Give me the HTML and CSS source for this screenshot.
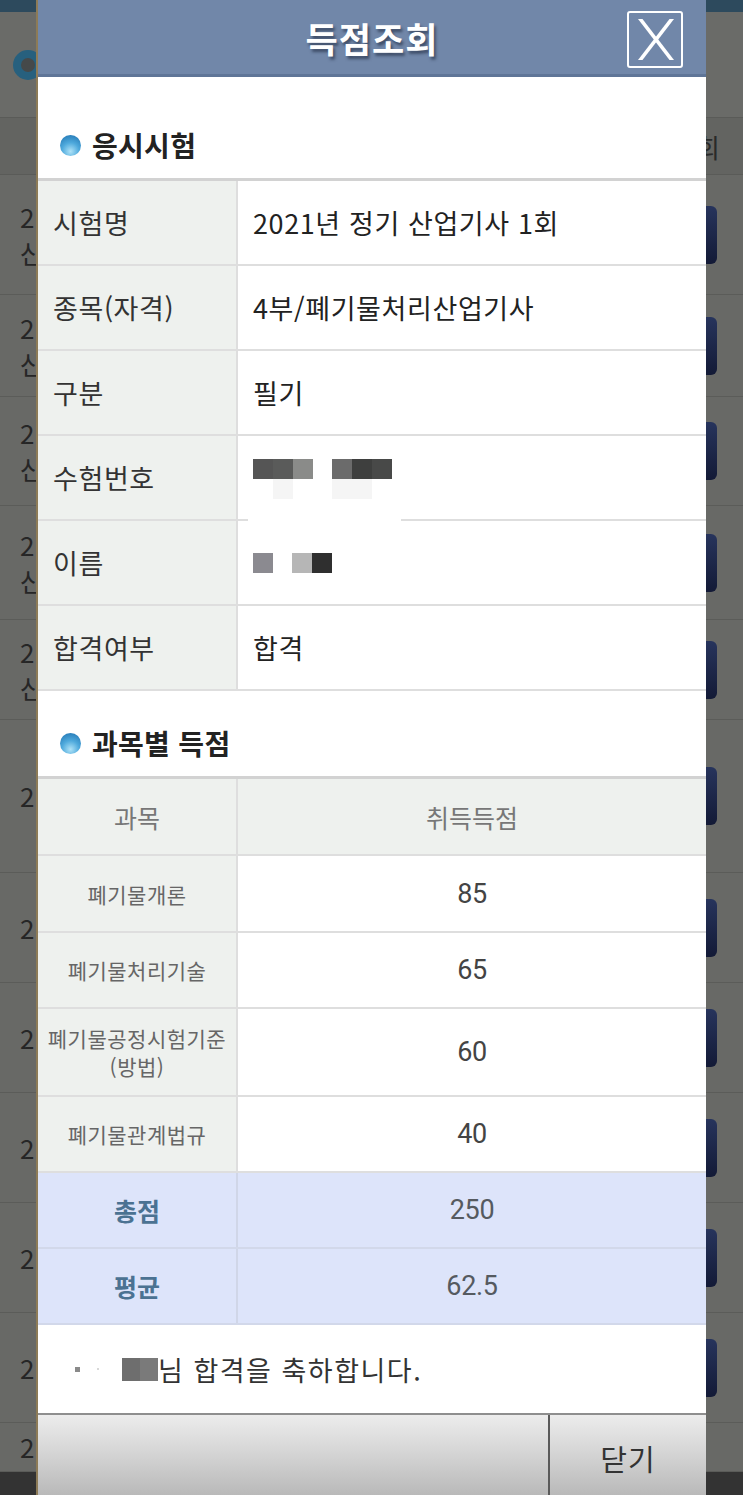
FILE: index.html
```html
<!DOCTYPE html>
<html lang="ko">
<head>
<meta charset="utf-8">
<title>득점조회</title>
<link rel="stylesheet" href="styles.css">
</head>
<body>
<div class="page">
  <div class="bg">
    <div class="bg-topbar"></div>
    <div class="bg-top"><span class="bg-ring"></span></div>
    <div class="bg-head"><span class="bg-head-text">회</span></div>
    <div class="bg-row h120"><div class="bg-cell">2<br>산</div><span class="bg-btn"></span></div>
    <div class="bg-row h102"><div class="bg-cell">2<br>산</div><span class="bg-btn"></span></div>
    <div class="bg-row h109"><div class="bg-cell">2<br>산</div><span class="bg-btn"></span></div>
    <div class="bg-row h114"><div class="bg-cell">2<br>산</div><span class="bg-btn"></span></div>
    <div class="bg-row h100"><div class="bg-cell">2<br>산</div><span class="bg-btn"></span></div>
    <div class="bg-row h153"><div class="bg-cell">2</div><span class="bg-btn"></span></div>
    <div class="bg-row h110"><div class="bg-cell">2</div><span class="bg-btn"></span></div>
    <div class="bg-row h110"><div class="bg-cell">2</div><span class="bg-btn"></span></div>
    <div class="bg-row h110"><div class="bg-cell">2</div><span class="bg-btn"></span></div>
    <div class="bg-row h110"><div class="bg-cell">2</div><span class="bg-btn"></span></div>
    <div class="bg-row h110"><div class="bg-cell">2</div><span class="bg-btn"></span></div>
    <div class="bg-row h49"><div class="bg-cell">2</div></div>
    <div class="bg-bottom"></div>
  </div>

  <div class="modal">
    <div class="m-head">
      <span class="m-title">득점조회</span>
      <span class="m-close">
        <svg width="52" height="53" viewBox="0 0 52 53">
          <path d="M9 6 L13.5 6 L45 47 L40.5 47 Z" fill="#fff"/>
          <path d="M40.5 6 L45 6 L13.5 47 L9 47 Z" fill="#fff"/>
        </svg>
      </span>
    </div>

    <div class="sec-title first">
      <span class="sec-label"><span class="ball"></span>응시시험</span>
    </div>

    <div class="info">
      <div class="info-row"><div class="info-label">시험명</div><div class="info-value">2021년 정기 산업기사 1회</div></div>
      <div class="info-row"><div class="info-label">종목(자격)</div><div class="info-value">4부/폐기물처리산업기사</div></div>
      <div class="info-row"><div class="info-label">구분</div><div class="info-value">필기</div></div>
      <div class="info-row gap-row"><div class="info-label">수험번호</div><div class="info-value">
        <span class="pix-group">
          <span class="pix-line"><span class="px p1"></span><span class="px p2"></span><span class="px p3"></span><span class="px sp"></span><span class="px p4"></span><span class="px p5"></span><span class="px p6"></span></span>
          <span class="pix-line"><span class="px pw0"></span><span class="px pw"></span><span class="px pw0"></span><span class="px sp"></span><span class="px pw"></span><span class="px pw"></span><span class="px pw0"></span></span>
        </span>
        <span class="border-gap"></span>
      </div></div>
      <div class="info-row"><div class="info-label">이름</div><div class="info-value">
        <span class="pix-line"><span class="px p7"></span><span class="px sp"></span><span class="px p8"></span><span class="px p9"></span></span>
      </div></div>
      <div class="info-row"><div class="info-label">합격여부</div><div class="info-value">합격</div></div>
    </div>

    <div class="sec-title second">
      <span class="sec-label"><span class="ball"></span>과목별 득점</span>
    </div>

    <div class="score">
      <div class="score-row head h77"><div class="s-label">과목</div><div class="s-value">취득득점</div></div>
      <div class="score-row h77"><div class="s-label">폐기물개론</div><div class="s-value num">85</div></div>
      <div class="score-row h76"><div class="s-label">폐기물처리기술</div><div class="s-value num">65</div></div>
      <div class="score-row h88"><div class="s-label">폐기물공정시험기준<br>(방법)</div><div class="s-value num">60</div></div>
      <div class="score-row h76"><div class="s-label">폐기물관계법규</div><div class="s-value num">40</div></div>
      <div class="score-row total h76"><div class="s-label">총점</div><div class="s-value num">250</div></div>
      <div class="score-row total h76"><div class="s-label">평균</div><div class="s-value num">62.5</div></div>
    </div>

    <div class="message">
      <span class="bullet"></span>
      <span class="faint-dot"></span>
      <span class="name-blur"><span class="nb1"></span><span class="nb2"></span></span>
      <span class="msg-text">님 합격을 축하합니다.</span>
    </div>

    <div class="btn-bar">
      <div class="btn-left"></div>
      <div class="btn-close">닫기</div>
    </div>
  </div>
</div>
</body>
</html>
```

FILE: styles.css
```css
html, body {
  margin: 0;
  padding: 0;
}

.page {
  position: relative;
  width: 743px;
  height: 1495px;
  overflow: hidden;
  background: #686966;
  font-family: "Noto Sans CJK KR", "Noto Sans", sans-serif;
}

/* ---------- dimmed page behind ---------- */
.bg {
  display: flex;
  flex-direction: column;
  width: 743px;
}

.bg-topbar {
  height: 12px;
  background: #2d4a5d;
}

.bg-top {
  height: 105px;
  box-sizing: border-box;
  padding: 38px 0 0 13px;
  background: #6a6b68;
}

.bg-ring {
  display: block;
  width: 30px;
  height: 30px;
  border-radius: 50%;
  box-sizing: border-box;
  border: 8px solid #27607e;
  background: #45494a;
}

.bg-head {
  height: 58px;
  box-sizing: border-box;
  background: #636461;
  border-top: 1px solid #5a5b58;
  border-bottom: 1px solid #5a5b58;
  display: flex;
  align-items: center;
  justify-content: flex-end;
  padding-right: 23px;
}

.bg-head-text {
  font-size: 26px;
  color: #2a2a2a;
}

.bg-row {
  box-sizing: border-box;
  border-bottom: 1px solid #5b5c59;
  display: flex;
  align-items: center;
  justify-content: space-between;
}

.h120 { height: 120px; }
.h102 { height: 102px; }
.h109 { height: 109px; }
.h114 { height: 114px; }
.h100 { height: 100px; }
.h153 { height: 153px; }
.h110 { height: 110px; }
.h49 { height: 49px; }

.bg-cell {
  margin-left: 20px;
  font-size: 26px;
  line-height: 36px;
  color: #262626;
  white-space: nowrap;
}

.bg-btn {
  display: block;
  width: 60px;
  height: 58px;
  margin-right: 26px;
  border-radius: 6px;
  background: linear-gradient(#27345c, #131a36);
}

.bg-bottom {
  height: 23px;
  background: #333333;
}

/* ---------- modal ---------- */
.modal {
  position: absolute;
  top: 0;
  left: 36px;
  width: 670px;
  height: 1495px;
  box-sizing: border-box;
  border-left: 2px solid #8d7b57;
  background: #ffffff;
  display: flex;
  flex-direction: column;
}

.m-head {
  position: relative;
  height: 77px;
  flex: none;
  box-sizing: border-box;
  background: #7187a9;
  border-bottom: 3px solid #5f7597;
  display: flex;
  align-items: center;
  justify-content: center;
}

.m-title {
  font-size: 35px;
  font-weight: 700;
  color: #ffffff;
  letter-spacing: 1px;
  text-shadow: 2px 3px 3px rgba(20, 30, 50, 0.55);
}

.m-close {
  position: absolute;
  top: 11px;
  right: 23px;
  width: 56px;
  height: 57px;
  box-sizing: border-box;
  border: 2px solid #ffffff;
  border-radius: 3px;
  display: flex;
}

.sec-title {
  flex: none;
  box-sizing: border-box;
  display: flex;
  align-items: flex-end;
  padding: 0 0 13px 22px;
}

.sec-title.first { height: 101px; }
.sec-title.second { height: 85px; }

.sec-label {
  display: flex;
  align-items: center;
  gap: 11px;
  font-size: 28px;
  font-weight: 700;
  line-height: 40px;
  letter-spacing: 0.3px;
  color: #222222;
}

.ball {
  display: block;
  width: 21px;
  height: 21px;
  border-radius: 50%;
  background: radial-gradient(circle at 50% 78%, #aee2f7 0%, #4ea9dc 45%, #1c6fae 100%);
}

/* info table */
.info {
  flex: none;
  border-top: 3px solid #d2d2d2;
}

.info-row {
  display: grid;
  grid-template-columns: 200px 1fr;
  height: 85px;
  box-sizing: border-box;
  border-bottom: 2px solid #dedede;
}

.info-label {
  background: #eef1ee;
  border-right: 2px solid #dedede;
  padding-left: 15px;
  display: flex;
  align-items: center;
  font-size: 27px;
  letter-spacing: 0.6px;
  color: #333333;
}

.info-value {
  position: relative;
  padding-left: 15px;
  display: flex;
  align-items: center;
  font-size: 27px;
  letter-spacing: 0.6px;
  color: #222222;
}

.gap-row .info-value {
  align-items: flex-start;
  padding-top: 23px;
  box-sizing: border-box;
}

.pix-group {
  display: flex;
  flex-direction: column;
}

.pix-line {
  display: flex;
}

.px {
  display: block;
  width: 20px;
  height: 20px;
}

.px.sp { width: 19px; }
.p1 { background: #555555; }
.p2 { background: #5a5b5a; }
.p3 { background: #8a8b89; }
.p4 { background: #6b6b6b; }
.p5 { background: #3e3f3e; }
.p6 { background: #484948; }
.p7 { background: #8b8a90; }
.p8 { background: #b6b6b6; }
.p9 { background: #2f2f2f; }
.pw { background: #f5f5f5; }
.pw0 { background: transparent; }

.border-gap {
  position: absolute;
  left: 10px;
  bottom: -2px;
  width: 153px;
  height: 2px;
  background: #ffffff;
}

/* score table */
.score {
  flex: none;
  border-top: 3px solid #d2d2d2;
}

.score-row {
  display: grid;
  grid-template-columns: 200px 1fr;
  box-sizing: border-box;
  border-bottom: 2px solid #dedede;
}

.h77 { height: 77px; }
.h76 { height: 76px; }
.h88 { height: 88px; }

.s-label {
  background: #eef1ee;
  border-right: 2px solid #dedede;
  display: flex;
  align-items: center;
  justify-content: center;
  text-align: center;
  font-size: 21px;
  line-height: 28px;
  letter-spacing: 0.5px;
  color: #666666;
}

.s-value {
  display: flex;
  align-items: center;
  justify-content: center;
  color: #444444;
}

.s-value.num {
  font-family: Roboto, "Noto Sans", sans-serif;
  font-size: 27px;
  letter-spacing: -0.3px;
}

.score-row.head .s-label,
.score-row.head .s-value {
  background: #eef1ee;
  font-size: 25px;
  color: #777777;
  letter-spacing: 0;
}

.score-row.total {
  background: #dde4fa;
  border-bottom-color: #d2d8ea;
}

.score-row.total .s-label {
  background: #dde4fa;
  border-right-color: #d0d6e8;
  font-size: 25px;
  font-weight: 700;
  color: #4b7292;
  letter-spacing: 0;
}

.score-row.total .s-value {
  color: #555a60;
}

/* message */
.message {
  flex: none;
  height: 88px;
  box-sizing: border-box;
  display: flex;
  align-items: center;
  padding-left: 37px;
}

.bullet {
  display: block;
  width: 5px;
  height: 5px;
  background: #8a8a8a;
}

.faint-dot {
  display: block;
  width: 2px;
  height: 2px;
  margin-left: 17px;
  background: #d8d8d8;
}

.name-blur {
  display: flex;
  margin-left: 23px;
}

.nb1, .nb2 {
  display: block;
  width: 18px;
  height: 23px;
}

.nb1 { background: #6e6e6e; }
.nb2 { background: #7a7a7a; }

.msg-text {
  font-size: 27px;
  color: #333333;
  letter-spacing: 1.5px;
}

/* bottom buttons */
.btn-bar {
  flex: none;
  height: 82px;
  box-sizing: border-box;
  border-top: 2px solid #8e8e8e;
  display: grid;
  grid-template-columns: 512px 1fr;
  background: linear-gradient(#ececec 0%, #d6d6d6 45%, #b9b9b9 100%);
}

.btn-left {
  border-right: 2px solid #5a5a5a;
}

.btn-close {
  display: flex;
  align-items: center;
  justify-content: center;
  padding-top: 6px;
  font-size: 29px;
  letter-spacing: 1px;
  color: #333333;
}
```
